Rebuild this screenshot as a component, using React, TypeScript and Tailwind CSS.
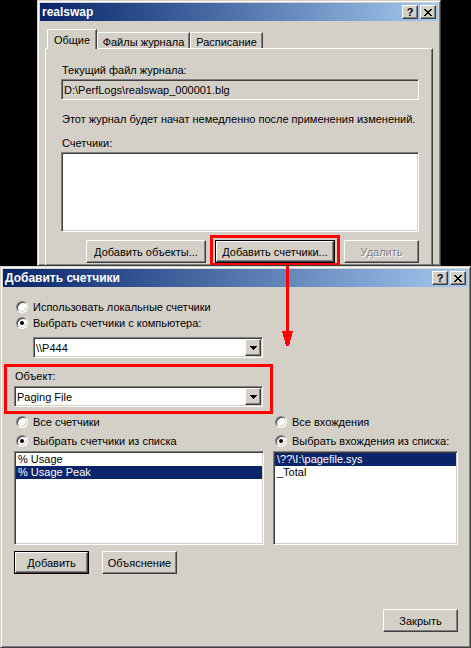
import type { ReactNode } from "react";

/* classic 3D edges */
const RAISED =
  "border border-t-white border-l-white border-r-[#404040] border-b-[#404040] bg-[#d4d0c8] shadow-[inset_-1px_-1px_#808080,inset_1px_1px_#d4d0c8]";
const SUNKEN =
  "border border-t-[#808080] border-l-[#808080] border-r-white border-b-white shadow-[inset_1px_1px_#404040,inset_-1px_-1px_#d4d0c8]";
const WINDOW =
  "border border-t-[#d4d0c8] border-l-[#d4d0c8] border-r-[#404040] border-b-[#404040] bg-[#d4d0c8] p-[2px] shadow-[inset_1px_1px_#fff,inset_-1px_-1px_#808080]";

const X_ROWS = ["11000011", "01100110", "00111100", "00011000", "00111100", "01100110", "11000011"];

function CloseGlyph() {
  return (
    <svg width="8" height="7" viewBox="0 0 8 7" shapeRendering="crispEdges">
      {X_ROWS.flatMap((row, y) =>
        row.split("").map((c, x) => (c === "1" ? <rect key={`${x}-${y}`} x={x} y={y} width="1" height="1" fill="#000" /> : null))
      )}
    </svg>
  );
}

function TitleBar({ title }: { title: string }) {
  return (
    <div className="flex h-[18px] items-center bg-linear-to-r from-[#0a246a] to-[#a6caf0] pl-[2px] pr-[2px]">
      <span className="flex-1 text-[12px] font-bold leading-[18px] text-white">{title}</span>
      <div className="flex gap-[2px]">
        <span className={`${RAISED} flex h-[14px] w-4 items-center justify-center text-[11px] font-bold leading-none`}>?</span>
        <span className={`${RAISED} flex h-[14px] w-4 items-center justify-center`}>
          <CloseGlyph />
        </span>
      </div>
    </div>
  );
}

function Button({ children, className = "", isDefault = false, disabled = false }: { children: ReactNode; className?: string; isDefault?: boolean; disabled?: boolean }) {
  const inner = (
    <span
      className={`${RAISED} flex h-full w-full items-center justify-center ${disabled ? "text-[#808080] [text-shadow:1px_1px_0_#fff]" : ""}`}
    >
      {children}
    </span>
  );
  if (isDefault) return <span className={`block h-[23px] border border-black ${className}`}>{inner}</span>;
  return <span className={`block h-[23px] ${className}`}>{inner}</span>;
}

function Radio({ checked = false }: { checked?: boolean }) {
  return (
    <span className="flex h-3 w-3 shrink-0 items-center justify-center rounded-full border border-t-[#808080] border-l-[#808080] border-r-white border-b-white bg-white shadow-[inset_1px_1px_#404040,inset_-1px_-1px_#d4d0c8]">
      {checked && <span className="h-1 w-1 rounded-full bg-black" />}
    </span>
  );
}

function RadioRow({ label, checked }: { label: string; checked?: boolean }) {
  return (
    <div className="flex items-center gap-[5px] pl-[2px]">
      <Radio checked={checked} />
      <span>{label}</span>
    </div>
  );
}

function Combo({ value, className = "" }: { value: string; className?: string }) {
  return (
    <div className={`${SUNKEN} flex h-[21px] items-center bg-white p-[1px] ${className}`}>
      <span className="flex-1 pl-[1px]">{value}</span>
      <span className={`${RAISED} flex h-[17px] w-4 items-center justify-center`}>
        <svg width="7" height="4" viewBox="0 0 7 4" shapeRendering="crispEdges">
          <path d="M0 0h7v1h-1v1h-1v1h-1v1h-1v-1h-1v-1h-1v-1h-1z" fill="#000" />
        </svg>
      </span>
    </div>
  );
}

function ListBox({ items, selected }: { items: string[]; selected: number }) {
  return (
    <div className={`${SUNKEN} h-[94px] bg-white p-[1px]`}>
      {items.map((it, i) => (
        <div key={it} className={`h-[13px] pl-[2px] leading-[13px] ${i === selected ? "bg-[#0a246a] text-white" : ""}`}>
          {it}
        </div>
      ))}
    </div>
  );
}

export default function App() {
  return (
    <div className="relative h-[648px] w-[471px] overflow-hidden bg-black font-['Liberation_Sans',Arial,sans-serif] text-[11px] leading-[14px] text-black">
      {/* свойства журнала */}
      <div className={`${WINDOW} ml-[37px] h-[266px] w-[404px] overflow-hidden`}>
        <TitleBar title="realswap" />
        <div className="mx-[5px] mt-[8px]">
          <div className="flex h-[19px] items-end pl-[2px]">
            <span className="relative z-10 -mb-px flex h-[20px] w-[50px] justify-center rounded-tl-[2px] border-l border-t border-r border-l-white border-t-white border-r-[#404040] bg-[#d4d0c8] pt-[3px] shadow-[inset_-1px_0_#808080]">
              Общие
            </span>
            <span className="flex h-[16px] w-[93px] justify-center rounded-tl-[2px] border-l border-t border-r border-l-white border-t-white border-r-[#404040] pt-[2px] shadow-[inset_-1px_0_#808080]">
              Файлы журнала
            </span>
            <span className="flex h-[16px] w-[73px] justify-center rounded-tl-[2px] border-l border-t border-r border-l-white border-t-white border-r-[#404040] pt-[2px] shadow-[inset_-1px_0_#808080]">
              Расписание
            </span>
          </div>
          <div className="h-[240px] border border-t-white border-l-white border-r-[#404040] border-b-[#404040] pb-0 pl-[15px] pr-[13px] pt-[14px] shadow-[inset_-1px_-1px_#808080]">
            <div className="h-[14px] pl-[1px]">Текущий файл журнала:</div>
            <div className={`${SUNKEN} mt-[2px] flex h-[21px] items-center pl-[2px]`}>D:\PerfLogs\realswap_000001.blg</div>
            <div className="mt-[12px] h-[14px] pl-[1px]">Этот журнал будет начат немедленно после применения изменений.</div>
            <div className="mt-[10px] h-[14px] pl-[1px]">Счетчики:</div>
            <div className={`${SUNKEN} mt-[2px] h-[80px] bg-white`} />
            <div className="mt-[3px] flex items-start justify-end gap-[4px]">
              <Button className="mt-[5px] w-[120px]">Добавить объекты...</Button>
              <div className="border-[3px] border-b-[3px] border-[#ff0000] px-[2px] pt-[2px]">
                <Button isDefault className="w-[120px]">
                  Добавить счетчики...
                </Button>
              </div>
              <Button disabled className="mt-[5px] w-[75px]">
                Удалить
              </Button>
            </div>
          </div>
        </div>
      </div>

      {/* добавить счетчики */}
      <div className={`${WINDOW} flex h-[382px] w-[471px] flex-col`}>
        <TitleBar title="Добавить счетчики" />
        <div className="flex flex-1 flex-col pb-[13px] pl-[11px] pr-[10px]">
          <div className="mt-[12px] flex h-4 items-center">
            <RadioRow label="Использовать локальные счетчики" />
          </div>
          <div className="flex h-4 items-center">
            <RadioRow label="Выбрать счетчики с компьютера:" checked />
          </div>
          <Combo value="\\P444" className="ml-[19px] mt-[6px] w-[230px]" />
          <div className="-mx-[10px] mt-[6px] w-[269px] border-[3px] border-[#ff0000] px-[7px] pb-[4px] pt-[2px]">
            <div className="h-[14px] pl-[1px]">Объект:</div>
            <Combo value="Paging File" className="mt-[3px]" />
          </div>
          <div className="grid grid-cols-[250px_185px] gap-x-[9px]">
            <div className="flex h-[15px] items-center">
              <RadioRow label="Все счетчики" />
            </div>
            <div className="flex h-[15px] items-center">
              <RadioRow label="Все вхождения" />
            </div>
            <div className="mt-[4px] flex h-4 items-center">
              <RadioRow label="Выбрать счетчики из списка" checked />
            </div>
            <div className="mt-[4px] flex h-4 items-center">
              <RadioRow label="Выбрать вхождения из списка:" checked />
            </div>
            <div className="mt-[2px]">
              <ListBox items={["% Usage", "% Usage Peak"]} selected={1} />
            </div>
            <div className="mt-[2px]">
              <ListBox items={["\\??\\I:\\pagefile.sys", "_Total"]} selected={0} />
            </div>
          </div>
          <div className="mt-[6px] flex gap-[13px]">
            <Button isDefault className="w-[75px]">
              Добавить
            </Button>
            <Button className="w-[75px]">Объяснение</Button>
          </div>
          <div className="mt-auto flex justify-end">
            <Button className="w-[75px]">Закрыть</Button>
          </div>
        </div>
      </div>

      {/* стрелка-указатель поверх окон */}
      <svg className="absolute left-[281px] top-[266px] z-20" width="13" height="81" viewBox="0 0 13 81" shapeRendering="crispEdges">
        <rect x="5" y="0" width="3" height="66" fill="#ff0000" />
        <path d="M1 65h11l-4 15h-3z" fill="#ff0000" />
      </svg>
    </div>
  );
}
